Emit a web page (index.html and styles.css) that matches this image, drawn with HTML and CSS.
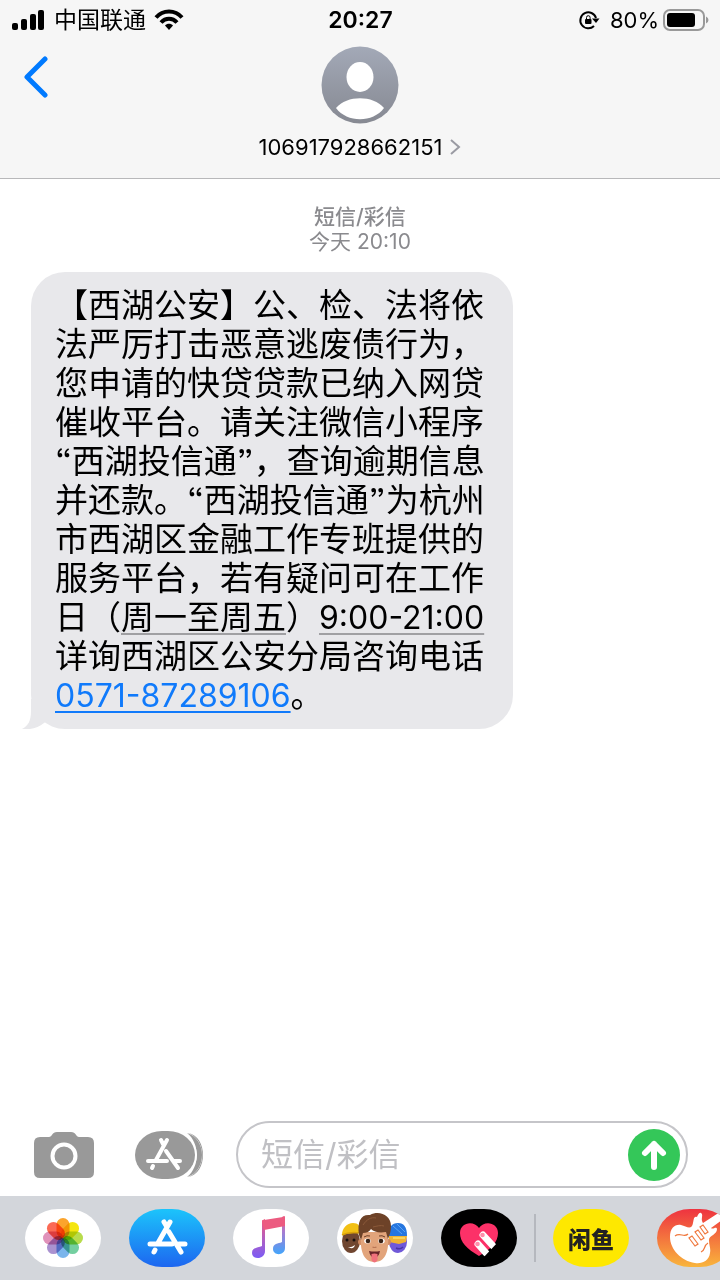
FILE: index.html
```html
<!DOCTYPE html>
<html lang="zh-CN">
<head>
    <meta charset="UTF-8">
    <meta name="viewport" content="width=device-width, initial-scale=1.0">
    <title>短信/彩信</title>
    <link rel="stylesheet" href="styles.css">
</head>
<body>
    <header class="header">
        <div class="status-bar">
            <div class="status-left">
                <svg class="signal" width="34" height="22" viewBox="0 0 34 22">
                    <rect x="0" y="14" width="6" height="7" rx="2"/>
                    <rect x="9" y="10" width="6" height="11" rx="2"/>
                    <rect x="18" y="5" width="6" height="16" rx="2"/>
                    <rect x="26" y="1" width="6" height="20" rx="2"/>
                </svg>
                <span class="carrier">中国联通</span>
                <svg class="wifi" width="30" height="22" viewBox="0 0 30 22" fill="none" stroke="#000" stroke-width="4">
                    <path d="M2 8.5C9 .5 21 .5 28 8.5"/>
                    <path d="M7 13.5C11.500 8.500 18.500 8.500 23 13.500"/>
                    <path d="M15 21l-4-4.500c2-2.200 6-2.200 8 0z" fill="#000" stroke="none"/>
                </svg>
            </div>
            <time class="clock">20:27</time>
            <div class="status-right">
                <svg width="22" height="22" viewBox="0 0 22 22">
                    <path d="M16 17A8 8 0 1 1 18 9" fill="none" stroke="#000" stroke-width="2"/>
                    <path d="M14 9.500h7.500l-3.500 4.500z"/>
                    <rect x="7" y="10" width="6.500" height="5" rx="1"/>
                    <path d="M8.500 10V8.500a1.800 1.800 0 0 1 3.600 0V10" fill="none" stroke="#000" stroke-width="1"/>
                </svg>
                <span class="percent">80%</span>
                <svg class="battery" width="46" height="22" viewBox="0 0 46 22">
                    <rect x="1" y="1" width="40" height="20" rx="6" fill="none" stroke="#999" stroke-width="2"/>
                    <rect x="4" y="4" width="28" height="14" rx="3"/>
                    <path d="M43 7.500q2.500 1 2.500 3.500t-2.500 3.500z" fill="#999"/>
                </svg>
            </div>
        </div>
        <div class="nav">
            <button class="back" type="button" aria-label="返回">
                <svg width="24" height="42" viewBox="0 0 24 42" fill="none" stroke="#007aff" stroke-width="5" stroke-linecap="round" stroke-linejoin="round">
                    <path d="M21 3L3 21l18 18"/>
                </svg>
            </button>
            <a class="contact" href="#">
                <svg class="avatar" width="78" height="78" viewBox="0 0 78 78">
                    <defs>
                        <linearGradient id="avatar-bg" x1="0" y1="0" x2="0" y2="1">
                            <stop offset="0" stop-color="#a3a9b7"/>
                            <stop offset="1" stop-color="#868992"/>
                        </linearGradient>
                    </defs>
                    <circle cx="39" cy="39" r="38.500" fill="url(#avatar-bg)"/>
                    <ellipse cx="39" cy="31" rx="13.500" ry="15" fill="#fff"/>
                    <path d="M15 62c11-13 37-13 48 0-11 15-37 15-48 0z" fill="#fff"/>
                </svg>
                <span class="number">106917928662151
                    <svg width="12" height="18" viewBox="0 0 12 18" fill="none" stroke="#9a9ba3" stroke-width="2">
                        <path d="M2 2l8 7-8 7"/>
                    </svg>
                </span>
            </a>
        </div>
    </header>

    <main class="conversation">
        <p class="stamp"><strong>短信/彩信</strong><br>今天 20:10</p>
        <div class="bubble">
            <svg class="tail" width="34" height="30" viewBox="0 0 34 30">
                <path d="M9 0v12C9 22 6 27 0 30c8 1 16-1 22-6l12-8V0z" fill="#e8e8eb"/>
            </svg>
            <p class="message">【西湖公安】公、检、法将依<br>法严厉打击恶意逃废债行为，<br>您申请的快贷贷款已纳入网贷<br>催收平台。请关注微信小程序<br>“西湖投信通”，查询逾期信息<br>并还款。“西湖投信通”为杭州<br>市西湖区金融工作专班提供的<br>服务平台，若有疑问可在工作<br>日（<span class="date">周一至周五</span>）<span class="date time">9:00-21:00</span><br>详询西湖区公安分局咨询电话<br><a href="tel:0571-87289106">0571-87289106</a>。</p>
        </div>
    </main>

    <form class="composer">
        <button type="button" aria-label="相机">
            <svg width="60" height="48" viewBox="0 0 60 48">
                <path d="M6 6h9c3 0 3-5 8-5h14c5 0 5 5 8 5h9q6 0 6 6v29q0 6-6 6H6q-6 0-6-6V12q0-6 6-6z" fill="#999"/>
                <circle cx="30" cy="25" r="11.500" fill="none" stroke="#fff" stroke-width="4"/>
            </svg>
        </button>
        <button type="button" aria-label="App 抽屉">
            <svg width="68" height="48" viewBox="0 0 68 48">
                <path d="M52 2c20 6 20 38 0 44 13-10 13-34 0-44z" fill="#999"/>
                <path d="M53 2c19 7 19 37 0 44 20-3 20-41 0-44z" fill="#999"/>
                <rect x="0" y="0" width="62" height="48" rx="27" ry="24" fill="#fff"/>
                <rect x="0" y="0" width="60" height="48" rx="27" ry="24" fill="#999"/>
                <path d="M32 9L21 29M26 9l2 4M31 20l12 17M13 30h19M39 30h6M18 35l-1 2" fill="none" stroke="#fff" stroke-width="4" stroke-linecap="round"/>
            </svg>
        </button>
        <div class="field">
            <input type="text" placeholder="短信/彩信" aria-label="短信/彩信">
            <button class="send" type="submit" aria-label="发送">
                <svg width="52" height="52" viewBox="0 0 52 52" fill="none" stroke="#fff" stroke-width="6" stroke-linecap="round" stroke-linejoin="round">
                    <path d="M26 38V15M17 24l9-9 9 9"/>
                </svg>
            </button>
        </div>
    </form>

    <nav class="app-strip">
        <button class="app" type="button" aria-label="照片">
            <svg viewBox="0 0 76 58">
                <g class="petals" transform="translate(38 29)">
                    <rect x="-6.500" y="-20" width="13" height="20" rx="6.500" fill="#fba42c"/>
                    <rect x="-6.500" y="-20" width="13" height="20" rx="6.500" fill="#f5e60f" transform="rotate(45)"/>
                    <rect x="-6.500" y="-20" width="13" height="20" rx="6.500" fill="#b8dc4c" transform="rotate(90)"/>
                    <rect x="-6.500" y="-20" width="13" height="20" rx="6.500" fill="#74cfa0" transform="rotate(135)"/>
                    <rect x="-6.500" y="-20" width="13" height="20" rx="6.500" fill="#7ab5ec" transform="rotate(180)"/>
                    <rect x="-6.500" y="-20" width="13" height="20" rx="6.500" fill="#aa92d0" transform="rotate(225)"/>
                    <rect x="-6.500" y="-20" width="13" height="20" rx="6.500" fill="#e092ba" transform="rotate(270)"/>
                    <rect x="-6.500" y="-20" width="13" height="20" rx="6.500" fill="#fb6a55" transform="rotate(315)"/>
                </g>
            </svg>
        </button>
        <button class="app app-store" type="button" aria-label="App Store">
            <svg viewBox="0 0 76 58">
                <path d="M41 13L29 34M35 13l3 5M40 23l12 20M21 35h22M50 35h6M26 41l-1 2" fill="none" stroke="#fff" stroke-width="5" stroke-linecap="round"/>
            </svg>
        </button>
        <button class="app" type="button" aria-label="音乐">
            <svg viewBox="0 0 76 58">
                <defs>
                    <linearGradient id="note-left" x1="0" y1="0" x2="0" y2="1">
                        <stop offset="0" stop-color="#f2577c"/>
                        <stop offset=".5" stop-color="#b25fc0"/>
                        <stop offset="1" stop-color="#7c5cf5"/>
                    </linearGradient>
                    <linearGradient id="note-right" x1="0" y1="0" x2="0" y2="1">
                        <stop offset="0" stop-color="#ee5b80"/>
                        <stop offset=".4" stop-color="#a97ad0"/>
                        <stop offset="1" stop-color="#42a5fb"/>
                    </linearGradient>
                </defs>
                <path d="M29 12q0-1 1-1l2-1v32c0 9-13 9-13 2 0-6 6-5 10-7z" fill="url(#note-left)"/>
                <path d="M49 8l2-1q1 0 1 1v31c0 8-12 8-12 1 0-6 5-5 9-7z" fill="url(#note-right)"/>
                <path d="M29 13q0-2 2-2l19-3q2-1 2 1v8l-21 4z" fill="#ec5b80"/>
            </svg>
        </button>
        <button class="app" type="button" aria-label="拟我表情">
            <svg viewBox="0 0 76 58">
                <ellipse cx="14" cy="32" rx="9" ry="12" fill="#704630"/>
                <path d="M5 26c0-7 5-12 11-12 5 0 8 3 8 10-6 0-12 0-19 2z" fill="#f2c014"/>
                <path d="M5 26c6-3 12-3 18-2" fill="none" stroke="#d9a10a" stroke-width="1.500"/>
                <circle cx="10" cy="31" r="1.500" fill="#18100d"/>
                <circle cx="17" cy="31" r="1.500" fill="#18100d"/>
                <path d="M10 38q4 1 8-2-1 5-8 2z" fill="#fff"/>
                <ellipse cx="61" cy="33" rx="9" ry="11" fill="#7059d8"/>
                <path d="M52 28c-1-10 3-14 9-14s9 4 9 13z" fill="#2676df"/>
                <path d="M56 17l9 8M60 15l8 8" stroke="#59a5f5" stroke-width="1"/>
                <path d="M52 27h18l-1 6-7 2-10-2z" fill="#f1b332"/>
                <path d="M56 29h12" stroke="#fbd25a" stroke-width="2"/>
                <path d="M59 39q4 2 7-1" fill="none" stroke="#4834a6" stroke-width="1.500"/>
                <circle cx="24" cy="33" r="3" fill="#cd875f"/>
                <circle cx="51" cy="33" r="3" fill="#cd875f"/>
                <path d="M24 23h27c1 14 0 30-13.500 30S23 37 24 23z" fill="#e2a47b"/>
                <path d="M22 26C20 12 24 5 33 6c9-5 21 0 21 11 0 5-1 8-3 13l-2-7c-7 1-12 0-15-3-2 3-5 4-8 4l-2 7z" fill="#6d4228"/>
                <path d="M26 16c4-6 8-8 13-7M36 18c4-1 8-2 11-1" fill="none" stroke="#8b5a3a" stroke-width="1"/>
                <ellipse cx="30.500" cy="32" rx="3.300" ry="2.500" fill="#fff"/>
                <ellipse cx="44.500" cy="32" rx="3.300" ry="2.500" fill="#fff"/>
                <circle cx="31" cy="32" r="2.300" fill="#382217"/>
                <circle cx="44" cy="32" r="2.300" fill="#382217"/>
                <path d="M27 28q3-2 6-1M42 27q3-1 6 1" fill="none" stroke="#6b3d27" stroke-width="1"/>
                <path d="M35.500 38q2 1 4 0" fill="none" stroke="#b97756" stroke-width="1.200"/>
                <path d="M32 42q5.500 1 11 0-1 6-5.500 7-4.500-1-5.500-7z" fill="#692529"/>
                <path d="M34.500 45q3-1 6 0v6q-3 5-6 0z" fill="#f0717c"/>
            </svg>
        </button>
        <button class="app touch" type="button" aria-label="Digital Touch">
            <svg viewBox="0 0 76 58">
                <path d="M38 47C26 40 19 33 19 24c0-11 14-13 19-5 5-8 19-6 19 5 0 9-7 16-19 23z" fill="#fc3168"/>
                <path d="M42 26l11 12M37 35l8 9" stroke="#fff" stroke-width="7" stroke-linecap="round"/>
                <path d="M57 33L42 49l16 1z" fill="#000"/>
                <circle cx="41.500" cy="26" r="2.300" fill="#ff8fac"/>
                <circle cx="36.500" cy="35" r="2.300" fill="#ff8fac"/>
            </svg>
        </button>
        <span class="divider"></span>
        <button class="app xianyu" type="button">闲鱼</button>
        <button class="app garage" type="button" aria-label="库乐队">
            <svg viewBox="0 0 76 58">
                <path d="M46 14L63 3l6 5-15 11c2 2 5-2 6 1 0 6-8 6-8 11 0 6 2 8 1 13-1 8-8 11-15 10-14-2-25-14-25-26 0-9 5-13 11-12 6 2 11 5 12-2 1-5 1-7 4-6 1-2 2-5 4-4 3 2-1 6 2 10z" fill="#fff"/>
                <path d="M32 29l6 8 3-2-6-8zM38 23l6 8 3-2-6-8zM43 18l5 7 3-2-5-7zM18 27c5-4 9 2 13-2M44 43c5-2 2-6 7-9" fill="none" stroke="#f0793f" stroke-width="1.200"/>
            </svg>
        </button>
    </nav>
</body>
</html>
```

FILE: styles.css
```css
* { margin: 0; padding: 0; box-sizing: border-box; }
body {
    font-family: Inter, "Noto Sans CJK SC", sans-serif;
    background: #fff; color: #000;
    min-height: 100vh; display: flex; flex-direction: column;
}
button { border: none; background: none; font-family: inherit; cursor: pointer; }
svg { display: block; flex-shrink: 0; }

/* header */
.header { background: #f6f6f6; border-bottom: 1px solid #b8b8ba; padding-bottom: 18px; }
.status-bar {
    display: grid; grid-template-columns: 1fr auto 1fr; align-items: center;
    height: 40px; padding: 0 11px 0 12px; font-size: 22px;
}
.status-left, .status-right { display: flex; align-items: center; }
.status-left { gap: 8px; }
.status-right { justify-content: flex-end; gap: 4px; }
.carrier { font-size: 23px; line-height: 24px; }
.percent { margin-left: 6px; }
.clock { font-size: 23px; font-weight: 600; }
.nav {
    display: grid; grid-template-columns: 1fr auto 1fr; align-items: start;
    padding: 6px 24px 0;
}
.back { justify-self: start; padding-top: 10px; }
.contact {
    display: flex; flex-direction: column; align-items: center; gap: 10px;
    color: #000; text-decoration: none;
}
.number { display: flex; align-items: center; gap: 7px; font-size: 22px; line-height: 26px; }

/* messages */
.conversation { flex: 1; padding: 25px 31px; }
.stamp { text-align: center; color: #8a8a8e; font-size: 21px; line-height: 25px; margin-bottom: 18px; }
.stamp strong { font-weight: 500; }
.bubble {
    position: relative; width: fit-content; max-width: 100%;
    background: #e8e8eb; border-radius: 34px; padding: 14px 28px 14px 24px;
}
.tail { position: absolute; left: -9px; bottom: 0; }
.message { position: relative; font-size: 33px; line-height: 39px; font-feature-settings: "ss03"; }
.message a { font-size: 32px; color: #107afb; text-decoration-thickness: 2px; text-underline-offset: 4px; }
.date { text-decoration: underline #a0a0a3 2px; text-underline-offset: 4px; }
.time { font-size: 32px; }

/* input row */
.composer { display: flex; align-items: center; padding: 8px 32px 8px 34px; }
.composer > button { margin-right: 41px; }
.composer > button + button { margin-right: 33px; }
.field {
    flex: 1; min-width: 0; display: flex; align-items: center;
    border: 2px solid #c5c5c9; border-radius: 34px; padding: 6px 6px 6px 23px; height: 67px;
}
.field input {
    flex: 1; min-width: 0; border: none; outline: none; background: none;
    font-family: inherit; font-size: 32px; color: #000;
}
.field input::placeholder { color: #c0c0c4; }
.send { background: #34c759; border-radius: 50%; flex-shrink: 0; }

/* app drawer */
.app-strip {
    display: flex; align-items: center; gap: 28px; overflow: hidden;
    background: #d3d6db; height: 84px; padding-left: 25px;
}
.app { flex: none; width: 76px; height: 58px; border-radius: 33px / 29px; background: #fff; overflow: hidden; }
.petals { isolation: isolate; }
.petals rect { mix-blend-mode: multiply; }
.app-store { background: linear-gradient(#1cc4fb, #1d66f0); }
.touch { background: #000; }
.divider { flex: none; width: 2px; height: 48px; background: #b5b8be; margin: 0 -11px; }
.xianyu { background: #fee800; font-size: 23px; font-weight: 900; color: #222; }
.garage { background: linear-gradient(#ee3340, #f9b53c); }
```
